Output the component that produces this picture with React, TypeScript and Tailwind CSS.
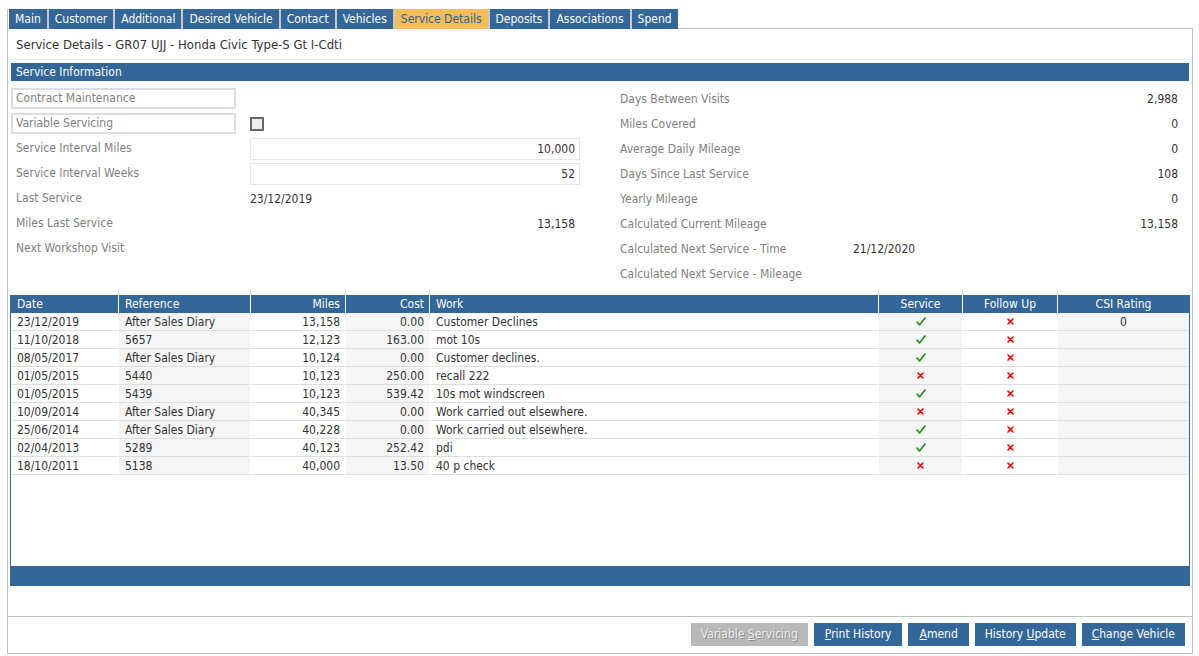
import React from "react";

const FONT = "font-['Tahoma','DejaVu_Sans_Condensed','Liberation_Sans',sans-serif]";

const tabs = [
  "Main",
  "Customer",
  "Additional",
  "Desired Vehicle",
  "Contact",
  "Vehicles",
  "Service Details",
  "Deposits",
  "Associations",
  "Spend",
];

type Row = {
  date: string;
  ref: string;
  miles: string;
  cost: string;
  work: string;
  service: boolean;
  csi?: string;
};

const rows: Row[] = [
  { date: "23/12/2019", ref: "After Sales Diary", miles: "13,158", cost: "0.00", work: "Customer Declines", service: true, csi: "0" },
  { date: "11/10/2018", ref: "5657", miles: "12,123", cost: "163.00", work: "mot 10s", service: true },
  { date: "08/05/2017", ref: "After Sales Diary", miles: "10,124", cost: "0.00", work: "Customer declines.", service: true },
  { date: "01/05/2015", ref: "5440", miles: "10,123", cost: "250.00", work: "recall 222", service: false },
  { date: "01/05/2015", ref: "5439", miles: "10,123", cost: "539.42", work: "10s mot windscreen", service: true },
  { date: "10/09/2014", ref: "After Sales Diary", miles: "40,345", cost: "0.00", work: "Work carried out elsewhere.", service: false },
  { date: "25/06/2014", ref: "After Sales Diary", miles: "40,228", cost: "0.00", work: "Work carried out elsewhere.", service: true },
  { date: "02/04/2013", ref: "5289", miles: "40,123", cost: "252.42", work: "pdi", service: true },
  { date: "18/10/2011", ref: "5138", miles: "40,000", cost: "13.50", work: "40 p check", service: false },
];

const Check = () => (
  <svg width="10" height="9" viewBox="0 0 10 9" className="block">
    <path d="M1 5 L3.5 8 L9 1" fill="none" stroke="#1e8c1e" strokeWidth="1.6" strokeLinecap="round" strokeLinejoin="round" />
  </svg>
);

const Cross = () => (
  <svg width="7" height="7" viewBox="0 0 7 7" className="block">
    <path d="M1 1 L6 6 M6 1 L1 6" fill="none" stroke="#f00000" strokeWidth="1.6" strokeLinecap="round" />
  </svg>
);

const GRID = "grid grid-cols-[107px_131px_94px_83px_448px_83px_94px_131px] gap-x-px";
const CELL = "h-[18px] border-b border-[#dedede] pt-[2px] leading-[15px] whitespace-nowrap";

function LeftLabel({ children }: { children: React.ReactNode }) {
  return <div className="text-[#808080] pl-[5px] leading-[25px]">{children}</div>;
}

export default function App() {
  return (
    <div className={`w-[1199px] h-[656px] bg-white text-[12px] text-[#333333] ${FONT}`}>
      <div className="pl-[7px] pt-[9px] w-[1193px]">
        {/* Tabs */}
        <div className="flex h-[20px]">
          <div className="w-[2px] border-l border-[#c0c0c0]" />
          <div className="flex gap-[2px] bg-[#c8c8c8]">
            {tabs.map((t) => (
              <div
                key={t}
                className={
                  t === "Service Details"
                    ? "px-[6px] leading-[20px] bg-[#f6bc57] text-[#2f6396]"
                    : "px-[6px] leading-[20px] bg-[#336699] text-white"
                }
              >
                {t}
              </div>
            ))}
          </div>
          <div className="flex-1 border-b border-[#c0c0c0]" />
        </div>
        {/* Panel */}
        <div className="h-[625px] border-x border-b border-[#c0c0c0] flex flex-col">
          <div className="px-[3px] flex flex-col">
            <div className="h-[31px] leading-[30px] pl-[5px] border-b border-[#efe6f2] text-[#333333] text-[13px] pt-px">
              Service Details - GR07 UJJ - Honda Civic Type-S Gt I-Cdti
            </div>
            <div className="mt-[3px] h-[18px] bg-[#336699] text-white leading-[18px] pl-[5px]">
              Service Information
            </div>
            {/* Form */}
            <div className="mt-[5px] flex">
              {/* Left column */}
              <div className="w-[569px] grid grid-cols-[225px_14px_330px] auto-rows-[25px] items-center">
                <div className="h-[21px] border-2 border-[#d8dde8] text-[#808080] pl-[3px] leading-[17px]">
                  Contract Maintenance
                </div>
                <div />
                <div />

                <div className="h-[21px] border-2 border-[#d8dde8] text-[#808080] pl-[3px] leading-[17px]">
                  Variable Servicing
                </div>
                <div />
                <div>
                  <div className="w-[14px] h-[14px] border-2 border-[#666666] bg-[#eeeeee]" />
                </div>

                <LeftLabel>Service Interval Miles</LeftLabel>
                <div />
                <div className="h-[22px] border border-[#e6e6e6] text-right pr-[4px] leading-[20px]">10,000</div>

                <LeftLabel>Service Interval Weeks</LeftLabel>
                <div />
                <div className="h-[22px] border border-[#e6e6e6] text-right pr-[4px] leading-[20px]">52</div>

                <LeftLabel>Last Service</LeftLabel>
                <div />
                <div>23/12/2019</div>

                <LeftLabel>Miles Last Service</LeftLabel>
                <div />
                <div className="text-right pr-[5px]">13,158</div>

                <LeftLabel>Next Workshop Visit</LeftLabel>
                <div />
                <div />

                <div />
                <div />
                <div />
              </div>
              {/* Right column */}
              <div className="flex-1 pl-[40px] pr-[11px] grid grid-cols-[233px_1fr] auto-rows-[25px] items-center text-[#808080]">
                <div>Days Between Visits</div>
                <div className="text-right text-[#333333]">2,988</div>
                <div>Miles Covered</div>
                <div className="text-right text-[#333333]">0</div>
                <div>Average Daily Mileage</div>
                <div className="text-right text-[#333333]">0</div>
                <div>Days Since Last Service</div>
                <div className="text-right text-[#333333]">108</div>
                <div>Yearly Mileage</div>
                <div className="text-right text-[#333333]">0</div>
                <div>Calculated Current Mileage</div>
                <div className="text-right text-[#333333]">13,158</div>
                <div>Calculated Next Service - Time</div>
                <div className="text-[#333333]">21/12/2020</div>
                <div>Calculated Next Service - Mileage</div>
                <div />
              </div>
            </div>
            {/* Table */}
            <div className="mt-[9px] ml-[-1px] mr-[-1px] h-[271px] border-x border-[#336699] flex flex-col">
              <div className={`${GRID} bg-white h-[18px]`}>
                <div className="bg-[#336699] text-white leading-[18px] pl-[6px]">Date</div>
                <div className="bg-[#336699] text-white leading-[18px] pl-[6px]">Reference</div>
                <div className="bg-[#336699] text-white leading-[18px] text-right pr-[5px]">Miles</div>
                <div className="bg-[#336699] text-white leading-[18px] text-right pr-[5px]">Cost</div>
                <div className="bg-[#336699] text-white leading-[18px] pl-[6px]">Work</div>
                <div className="bg-[#336699] text-white leading-[18px] text-center">Service</div>
                <div className="bg-[#336699] text-white leading-[18px] text-center">Follow Up</div>
                <div className="bg-[#336699] text-white leading-[18px] text-center">CSI Rating</div>
              </div>
              {rows.map((r, i) => (
                <div key={i} className={GRID}>
                  <div className={`${CELL} bg-white pl-[6px]`}>{r.date}</div>
                  <div className={`${CELL} bg-[#f5f5f5] pl-[6px]`}>{r.ref}</div>
                  <div className={`${CELL} bg-white text-right pr-[5px]`}>{r.miles}</div>
                  <div className={`${CELL} bg-[#f5f5f5] text-right pr-[5px]`}>{r.cost}</div>
                  <div className={`${CELL} bg-white pl-[6px]`}>{r.work}</div>
                  <div className="h-[18px] border-b border-[#dedede] bg-[#f5f5f5] flex items-center justify-center">
                    {r.service ? <Check /> : <Cross />}
                  </div>
                  <div className="h-[18px] border-b border-[#dedede] bg-white flex items-center justify-center">
                    <Cross />
                  </div>
                  <div className={`${CELL} bg-[#f5f5f5] text-center`}>{r.csi ?? ""}</div>
                </div>
              ))}
              <div className="flex-1" />
            </div>
            <div className="ml-[-1px] mr-[-1px] h-[20px] bg-[#336699]" />
          </div>
          <div className="h-[30px]" />
          <div className="border-t border-[#c0c0c0] flex-1 flex justify-end items-start pt-[6px] pr-[7px] gap-[6px]">
            <div className="h-[23px] px-[10px] bg-[#b9b9b9] text-[#ececec] leading-[23px] [text-shadow:1px_1px_0_#8f8f8f]">
              Variable <span className="underline">S</span>ervicing
            </div>
            <div className="h-[23px] px-[11px] bg-[#336699] text-white leading-[23px]">
              <span className="underline">P</span>rint History
            </div>
            <div className="h-[23px] px-[11px] bg-[#336699] text-white leading-[23px]">
              <span className="underline">A</span>mend
            </div>
            <div className="h-[23px] px-[10px] bg-[#336699] text-white leading-[23px]">
              History <span className="underline">U</span>pdate
            </div>
            <div className="h-[23px] px-[10px] bg-[#336699] text-white leading-[23px]">
              <span className="underline">C</span>hange Vehicle
            </div>
          </div>
        </div>
      </div>
    </div>
  );
}
